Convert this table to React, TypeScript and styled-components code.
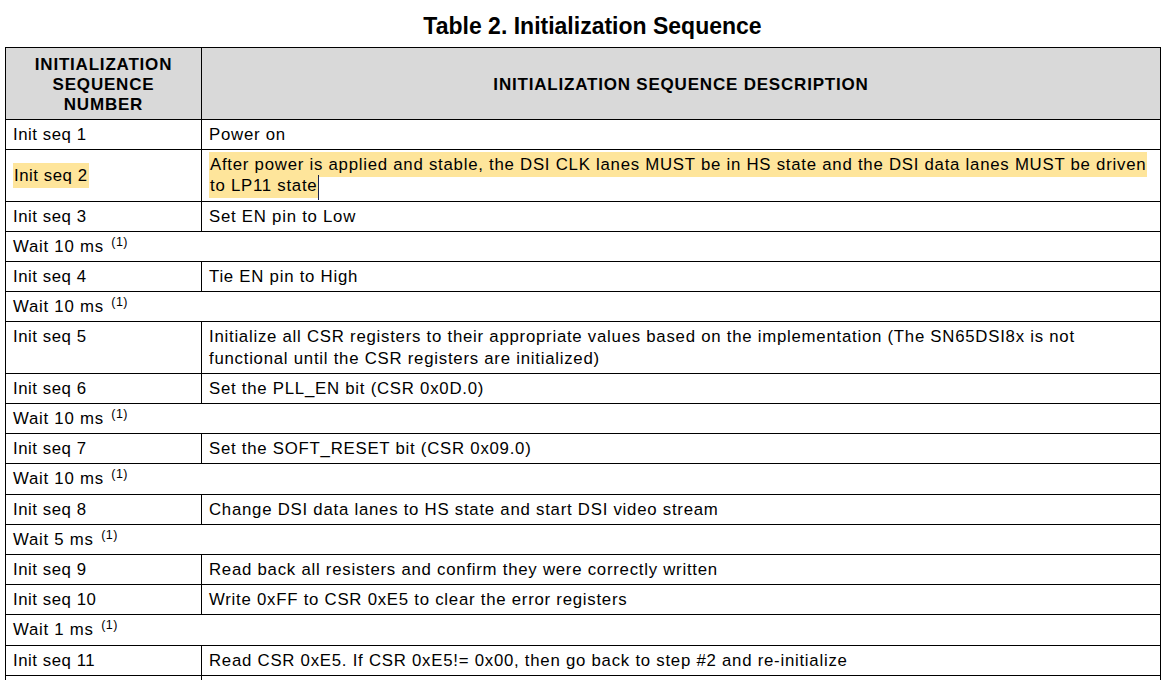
import React from "react";
import styled, { createGlobalStyle } from "styled-components";

const GlobalStyle = createGlobalStyle`
  html, body {
    margin: 0;
    padding: 0;
    overflow: hidden;
    background: #ffffff;
  }
  body {
    font-family: "Liberation Sans", Arial, sans-serif;
    color: #000;
  }
`;

const Page = styled.div`
  width: 1169px;
  height: 680px;
  overflow: hidden;
  display: flex;
  flex-direction: column;
`;

const Title = styled.h1`
  margin: 13px 0 8px 16px;
  height: 26px;
  font-size: 23px;
  line-height: 26px;
  font-weight: bold;
  text-align: center;
  color: #000;
`;

const Table = styled.table`
  margin-left: 5px;
  width: 1156px;
  border-collapse: collapse;
  table-layout: fixed;
  font-size: 16.8px;
  letter-spacing: 0.75px;
`;

const HeadCell = styled.th`
  background: #d9d9d9;
  border: 1px solid #000;
  height: 69px;
  padding: 2px 6px 0;
  font-size: 17px;
  line-height: 20px;
  font-weight: bold;
  text-align: center;
  vertical-align: middle;
  letter-spacing: 0.8px;
`;

const Cell = styled.td`
  border: 1px solid #000;
  padding: 4px 6px 4px 7px;
  line-height: 21.2px;
  vertical-align: top;
  white-space: nowrap;
`;

const NumberCell = styled(Cell)<{ $middle?: boolean }>`
  letter-spacing: 0.55px;
  vertical-align: ${(p) => (p.$middle ? "middle" : "top")};
`;

const WaitCell = styled(Cell)`
  letter-spacing: 0.75px;
`;

const Highlight = styled.span`
  background: #fee59b;
  padding: 3px 1px;
  -webkit-box-decoration-break: clone;
  box-decoration-break: clone;
`;

const Sup = styled.sup`
  font-size: 12.5px;
  line-height: 0;
  vertical-align: 6px;
  margin-left: 2px;
  letter-spacing: 0.5px;
`;

const CaretAnchor = styled.span`
  position: relative;
  display: inline-block;
  width: 0;
  height: 0;
`;

const Caret = styled.span`
  position: absolute;
  left: 0;
  top: -16px;
  width: 1px;
  height: 25px;
  background: #1a2350;
`;

type Row =
  | { kind: "seq"; n: string; d: string[]; hl?: boolean }
  | { kind: "wait"; t: string }
  | { kind: "blank" };

const rows: Row[] = [
  { kind: "seq", n: "Init seq 1", d: ["Power on"] },
  {
    kind: "seq",
    n: "Init seq 2",
    d: [
      "After power is applied and stable, the DSI CLK lanes MUST be in HS state and the DSI data lanes MUST be driven",
      "to LP11 state",
    ],
    hl: true,
  },
  { kind: "seq", n: "Init seq 3", d: ["Set EN pin to Low"] },
  { kind: "wait", t: "Wait 10 ms" },
  { kind: "seq", n: "Init seq 4", d: ["Tie EN pin to High"] },
  { kind: "wait", t: "Wait 10 ms" },
  {
    kind: "seq",
    n: "Init seq 5",
    d: [
      "Initialize all CSR registers to their appropriate values based on the implementation (The SN65DSI8x is not",
      "functional until the CSR registers are initialized)",
    ],
  },
  { kind: "seq", n: "Init seq 6", d: ["Set the PLL_EN bit (CSR 0x0D.0)"] },
  { kind: "wait", t: "Wait 10 ms" },
  { kind: "seq", n: "Init seq 7", d: ["Set the SOFT_RESET bit (CSR 0x09.0)"] },
  { kind: "wait", t: "Wait 10 ms" },
  {
    kind: "seq",
    n: "Init seq 8",
    d: ["Change DSI data lanes to HS state and start DSI video stream"],
  },
  { kind: "wait", t: "Wait 5 ms" },
  {
    kind: "seq",
    n: "Init seq 9",
    d: ["Read back all resisters and confirm they were correctly written"],
  },
  {
    kind: "seq",
    n: "Init seq 10",
    d: ["Write 0xFF to CSR 0xE5 to clear the error registers"],
  },
  { kind: "wait", t: "Wait 1 ms" },
  {
    kind: "seq",
    n: "Init seq 11",
    d: [
      "Read CSR 0xE5. If CSR 0xE5!= 0x00, then go back to step #2 and re-initialize",
    ],
  },
  { kind: "blank" },
];

function Lines({ lines }: { lines: string[] }) {
  return (
    <>
      {lines.map((l, i) => (
        <React.Fragment key={i}>
          {i > 0 && <br />}
          {l}
        </React.Fragment>
      ))}
    </>
  );
}

export default function App() {
  return (
    <>
      <GlobalStyle />
      <Page>
        <Title>Table 2. Initialization Sequence</Title>
        <Table>
          <colgroup>
            <col style={{ width: "196px" }} />
            <col />
          </colgroup>
          <thead>
            <tr>
              <HeadCell>
                INITIALIZATION
                <br />
                SEQUENCE
                <br />
                NUMBER
              </HeadCell>
              <HeadCell>INITIALIZATION SEQUENCE DESCRIPTION</HeadCell>
            </tr>
          </thead>
          <tbody>
            {rows.map((r, i) => {
              if (r.kind === "wait") {
                return (
                  <tr key={i}>
                    <WaitCell colSpan={2}>
                      {r.t} <Sup>(1)</Sup>
                    </WaitCell>
                  </tr>
                );
              }
              if (r.kind === "blank") {
                return (
                  <tr key={i}>
                    <NumberCell>&nbsp;</NumberCell>
                    <Cell>&nbsp;</Cell>
                  </tr>
                );
              }
              return (
                <tr key={i}>
                  <NumberCell $middle={r.hl}>
                    {r.hl ? <Highlight>{r.n}</Highlight> : r.n}
                  </NumberCell>
                  <Cell>
                    {r.hl ? (
                      <>
                        <Highlight>
                          <Lines lines={r.d} />
                        </Highlight>
                        <CaretAnchor>
                          <Caret />
                        </CaretAnchor>
                      </>
                    ) : (
                      <Lines lines={r.d} />
                    )}
                  </Cell>
                </tr>
              );
            })}
          </tbody>
        </Table>
      </Page>
    </>
  );
}
